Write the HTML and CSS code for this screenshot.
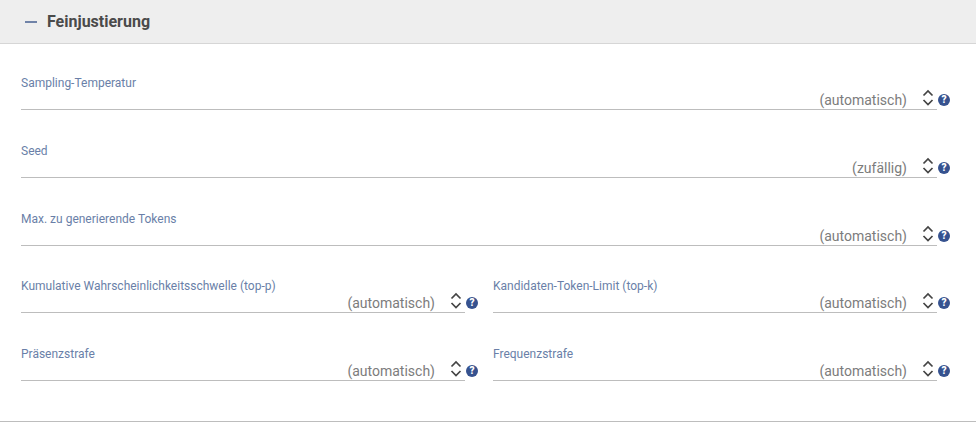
FILE: index.html
```html
<!DOCTYPE html>
<html lang="de">
<head>
<meta charset="utf-8">
<title>Feinjustierung</title>
<link rel="stylesheet" href="styles.css">
</head>
<body>
<section class="panel">
  <header class="panel-head">
    <span class="dash"></span>
    <h2 class="panel-title">Feinjustierung</h2>
  </header>
  <div class="panel-body">
    <div class="row">
      <div class="field">
        <label class="field-label">Sampling-Temperatur</label>
        <div class="field-control"><div class="field-input"><span class="value">(automatisch)</span><svg class="spin" viewBox="0 0 12 19"><path d="M1.500 6.500 6 2l4.500 4.500M1.500 11 6 15.500l4.500-4.500"/></svg></div><span class="help">?</span></div>
      </div>
    </div>
    <div class="row">
      <div class="field">
        <label class="field-label">Seed</label>
        <div class="field-control"><div class="field-input"><span class="value">(zufällig)</span><svg class="spin" viewBox="0 0 12 19"><path d="M1.500 6.500 6 2l4.500 4.500M1.500 11 6 15.500l4.500-4.500"/></svg></div><span class="help">?</span></div>
      </div>
    </div>
    <div class="row">
      <div class="field">
        <label class="field-label">Max. zu generierende Tokens</label>
        <div class="field-control"><div class="field-input"><span class="value">(automatisch)</span><svg class="spin" viewBox="0 0 12 19"><path d="M1.500 6.500 6 2l4.500 4.500M1.500 11 6 15.500l4.500-4.500"/></svg></div><span class="help">?</span></div>
      </div>
    </div>
    <div class="row">
      <div class="field">
        <label class="field-label">Kumulative Wahrscheinlichkeitsschwelle (top-p)</label>
        <div class="field-control"><div class="field-input"><span class="value">(automatisch)</span><svg class="spin" viewBox="0 0 12 19"><path d="M1.500 6.500 6 2l4.500 4.500M1.500 11 6 15.500l4.500-4.500"/></svg></div><span class="help">?</span></div>
      </div>
      <div class="field">
        <label class="field-label">Kandidaten-Token-Limit (top-k)</label>
        <div class="field-control"><div class="field-input"><span class="value">(automatisch)</span><svg class="spin" viewBox="0 0 12 19"><path d="M1.500 6.500 6 2l4.500 4.500M1.500 11 6 15.500l4.500-4.500"/></svg></div><span class="help">?</span></div>
      </div>
    </div>
    <div class="row">
      <div class="field">
        <label class="field-label">Präsenzstrafe</label>
        <div class="field-control"><div class="field-input"><span class="value">(automatisch)</span><svg class="spin" viewBox="0 0 12 19"><path d="M1.500 6.500 6 2l4.500 4.500M1.500 11 6 15.500l4.500-4.500"/></svg></div><span class="help">?</span></div>
      </div>
      <div class="field">
        <label class="field-label">Frequenzstrafe</label>
        <div class="field-control"><div class="field-input"><span class="value">(automatisch)</span><svg class="spin" viewBox="0 0 12 19"><path d="M1.500 6.500 6 2l4.500 4.500M1.500 11 6 15.500l4.500-4.500"/></svg></div><span class="help">?</span></div>
      </div>
    </div>
  </div>
</section>
</body>
</html>
```
FILE: styles.css
```css
* { box-sizing: border-box; }
html, body { margin: 0; padding: 0; background: #fff; }
body { font-family: Roboto, sans-serif; width: 976px; height: 422px; overflow: hidden; }
.panel { height: 422px; border-bottom: 1px solid #bdbdbd; }
.panel-head {
  height: 44px; background: #eee; border-bottom: 1px solid #d6d6d6;
  display: flex; align-items: center; padding-left: 25px; gap: 10px;
}
.dash { width: 12px; height: 2px; background: #7083a8; }
.panel-title { margin: 0; font-size: 16px; font-weight: 700; color: #4a4a4a; line-height: 20px; }
.panel-body { padding: 30px 26px 0 21px; display: flex; flex-direction: column; gap: 20px; }
.row { display: flex; gap: 15px; height: 47.75px; }
.field { flex: 1 1 0; min-width: 0; display: flex; flex-direction: column; }
.field-label { font-size: 12px; line-height: 18px; color: #6a7fa8; height: 19px; }
.field-control { display: flex; align-items: flex-end; height: 17px; }
.field-input {
  flex: 1; min-width: 0; height: 17px; border-bottom: 1px solid #bdbdbd;
  display: flex; justify-content: flex-end; align-items: flex-end;
}
.value { font-size: 14px; line-height: 17px; color: #7c7c7c; }
.spin { width: 12px; height: 19px; margin: 0 3px 0 15px; flex: none; fill: none; stroke: #444; stroke-width: 1.700; position: relative; top: -1px; }
.help {
  width: 12px; height: 12px; border-radius: 50%; background: #36528f; color: #fff;
  font-size: 10px; font-weight: 900; line-height: 12px; text-align: center; flex: none; margin: 0 0 4px 1px;
}
```
